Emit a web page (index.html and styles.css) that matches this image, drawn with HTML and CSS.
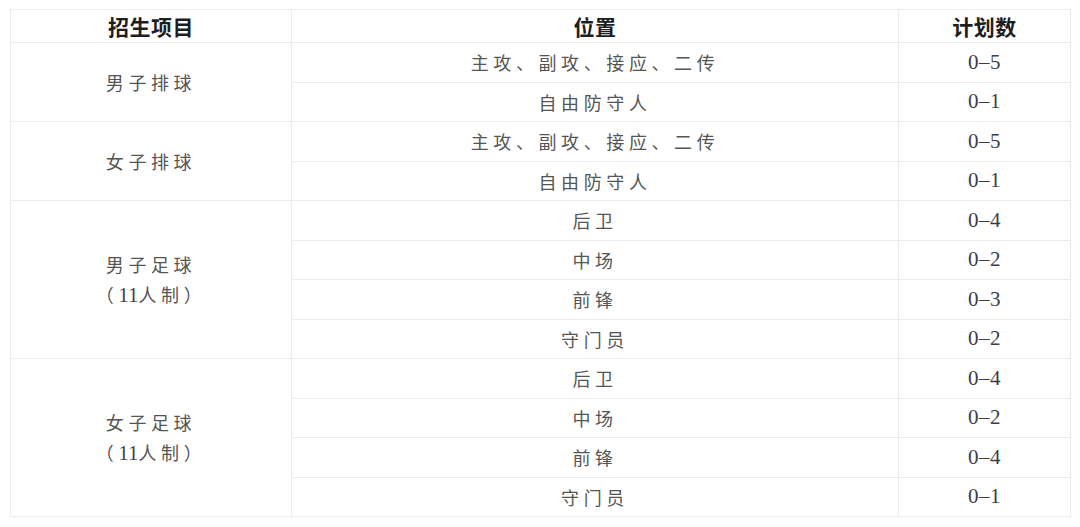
FILE: index.html
```html
<!DOCTYPE html>
<html lang="zh-CN">
<head>
<meta charset="utf-8">
<link rel="stylesheet" href="styles.css">
</head>
<body>
<table class="plan">
  <colgroup>
    <col class="c1">
    <col class="c2">
    <col class="c3">
  </colgroup>
  <thead>
    <tr class="head">
      <th>招生项目</th>
      <th>位置</th>
      <th>计划数</th>
    </tr>
  </thead>
  <tbody>
    <tr><td rowspan="2" class="sport">男子排球</td><td class="pos">主攻、副攻、接应、二传</td><td class="num">0–5</td></tr>
    <tr><td class="pos">自由防守人</td><td class="num">0–1</td></tr>
    <tr><td rowspan="2" class="sport">女子排球</td><td class="pos">主攻、副攻、接应、二传</td><td class="num">0–5</td></tr>
    <tr><td class="pos">自由防守人</td><td class="num">0–1</td></tr>
    <tr><td rowspan="4" class="sport raise">男子足球<br>（<span class="dg">11</span>人制）</td><td class="pos">后卫</td><td class="num">0–4</td></tr>
    <tr><td class="pos">中场</td><td class="num">0–2</td></tr>
    <tr><td class="pos">前锋</td><td class="num">0–3</td></tr>
    <tr><td class="pos">守门员</td><td class="num">0–2</td></tr>
    <tr><td rowspan="4" class="sport">女子足球<br>（<span class="dg">11</span>人制）</td><td class="pos">后卫</td><td class="num">0–4</td></tr>
    <tr><td class="pos">中场</td><td class="num">0–2</td></tr>
    <tr><td class="pos">前锋</td><td class="num">0–4</td></tr>
    <tr><td class="pos">守门员</td><td class="num">0–1</td></tr>
  </tbody>
</table>
</body>
</html>
```

FILE: styles.css
```css
html, body {
  margin: 0;
  padding: 0;
  background: #ffffff;
}

body {
  padding: 9px 0 0 10px;
}

.plan {
  border-collapse: collapse;
  table-layout: fixed;
  width: 1061px;
  font-family: "Noto Sans CJK SC", "Noto Sans", sans-serif;
}

.c1 { width: 281px; }
.c2 { width: 607px; }
.c3 { width: 172px; }

.plan th,
.plan td {
  border: 1px solid #ebebeb;
  padding: 0;
  text-align: center;
  vertical-align: middle;
}

.head th {
  height: 32px;
  font-size: 21px;
  font-weight: 700;
  color: #1e1e1e;
  letter-spacing: 0.5px;
  line-height: 22px;
}

.plan tbody td {
  height: 38.5px;
}

.sport,
.pos {
  font-size: 18px;
  font-weight: 400;
  color: #555555;
  letter-spacing: 4.6px;
  padding-left: 5px;
  line-height: 30px;
}

.sport {
  padding-left: 3px;
}

.raise {
  padding-bottom: 26px;
}

.dg {
  font-family: "Liberation Serif", serif;
  font-size: 21px;
  letter-spacing: 0;
  color: #3f3f50;
}

.num {
  font-family: "Liberation Serif", serif;
  font-size: 21px;
  color: #3c3c48;
  letter-spacing: 0.5px;
}
```
